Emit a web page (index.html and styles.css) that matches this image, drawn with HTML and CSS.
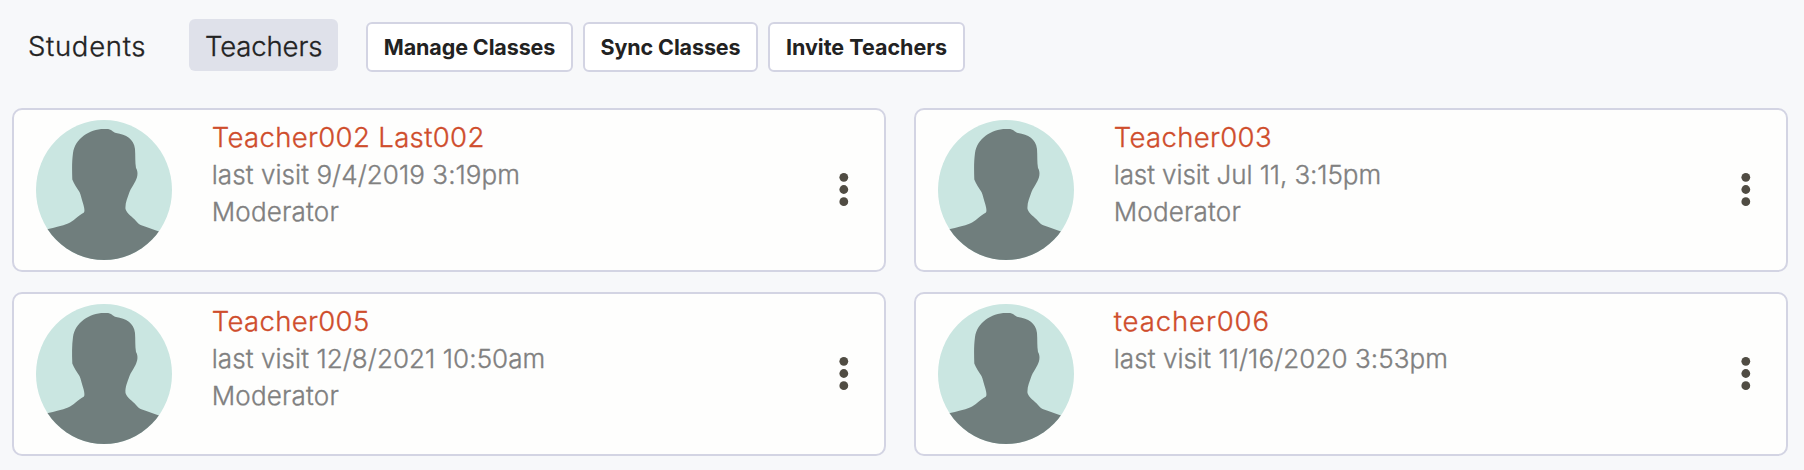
FILE: index.html
```html
<!DOCTYPE html>
<html lang="en">
<head>
<meta charset="utf-8">
<title>Teachers</title>
<link rel="stylesheet" href="styles.css">
</head>
<body>
<svg class="defs" aria-hidden="true">
  <symbol id="avatar" viewBox="0 0 136 140">
    <clipPath id="oval"><ellipse cx="68" cy="70" rx="68" ry="70"/></clipPath>
    <g clip-path="url(#oval)">
      <rect width="136" height="140" fill="#cae6e1"/>
      <path fill="#707e7d" d="M0 112 L11 109.300 C19 107.300 26 106 32 103.500 C38 101 41 96.500 48 92.500 C49 91 48 87 47.500 85 C45.500 79 45 75 43.500 72 C41 68 38 64 36.300 59.500 C36 50 35.800 42 37 33 C39 19 53 9 68 9 C77 8.500 75 11.500 80 13 C90 14.500 98 19 99 29 C99.500 36 99 42 100 48 C102.500 52 101.500 57 99.500 61 C97 66 95 68 93.500 72 C91.500 78 89 83 89.500 89 C91 94 97 97 100 101 C102 103.500 103 104.500 106 105.500 C112 107.500 117 109.500 123 111.500 L136 116 V140 H0Z"/>
    </g>
  </symbol>
  <symbol id="more" viewBox="0 0 10 36">
    <g fill="#504c43"><circle cx="4.800" cy="5.300" r="4.400"/><circle cx="4.800" cy="17.500" r="4.400"/><circle cx="4.800" cy="29.700" r="4.400"/></g>
  </symbol>
</svg>
<header class="toolbar">
  <nav class="tabs">
    <a class="tab">Students</a>
    <a class="tab tab-active">Teachers</a>
  </nav>
  <div class="actions">
    <button class="button manage">Manage Classes</button>
    <button class="button sync">Sync Classes</button>
    <button class="button invite">Invite Teachers</button>
  </div>
</header>
<main class="cards">
  <article class="card">
    <svg class="avatar"><use href="#avatar"/></svg>
    <div class="info">
      <a class="name">Teacher002 Last002</a>
      <p class="meta">last visit 9/4/2019 3:19pm</p>
      <p class="meta role">Moderator</p>
    </div>
    <svg class="more"><use href="#more"/></svg>
  </article>
  <article class="card">
    <svg class="avatar"><use href="#avatar"/></svg>
    <div class="info">
      <a class="name">Teacher003</a>
      <p class="meta tight">last visit Jul 11, 3:15pm</p>
      <p class="meta role">Moderator</p>
    </div>
    <svg class="more"><use href="#more"/></svg>
  </article>
  <article class="card">
    <svg class="avatar"><use href="#avatar"/></svg>
    <div class="info">
      <a class="name">Teacher005</a>
      <p class="meta">last visit 12/8/2021 10:50am</p>
      <p class="meta role">Moderator</p>
    </div>
    <svg class="more"><use href="#more"/></svg>
  </article>
  <article class="card">
    <svg class="avatar"><use href="#avatar"/></svg>
    <div class="info">
      <a class="name wide">teacher006</a>
      <p class="meta">last visit 11/16/2020 3:53pm</p>
    </div>
    <svg class="more"><use href="#more"/></svg>
  </article>
</main>
</body>
</html>
```
FILE: styles.css
```css
* { box-sizing: border-box; }
body {
  margin: 0;
  height: 470px;
  overflow: hidden;
  background: #f7f8fa;
  font-family: Inter, "Liberation Sans", sans-serif;
  color: #222;
}
.defs { display: block; width: 0; height: 0; }
.toolbar {
  display: flex;
  gap: 28px;
  height: 108px;
  padding: 19px 12px 0;
}
.tabs { display: flex; gap: 27px; }
.tab {
  height: 52px;
  padding-left: 16px;
  border-radius: 6px;
  font-size: 27.500px;
  font-weight: 300;
  -webkit-text-stroke: 0.350px currentColor;
  line-height: 54px;
  white-space: nowrap;
}
.tab:first-child { width: 150px; letter-spacing: 0.700px; }
.tab-active { width: 149px; background: #dfe1ea; letter-spacing: -0.120px; }
.actions { display: flex; gap: 10px; padding-top: 3px; }
.button {
  height: 50px;
  padding: 0;
  border: 2px solid #d3d4e3;
  border-radius: 6px;
  background: #fff;
  color: #222;
  font: 700 21.500px/46px Inter, "Liberation Sans", sans-serif;
  letter-spacing: -0.120px;
  white-space: nowrap;
}
.manage { width: 207px; }
.sync { width: 175px; }
.invite { width: 197px; letter-spacing: 0; }
.cards {
  display: grid;
  grid-template-columns: 874px 874px;
  grid-auto-rows: 164px;
  gap: 20px 28px;
  padding-left: 12px;
}
.card {
  display: flex;
  align-items: flex-start;
  padding: 10px 35px 10px 22px;
  border: 2px solid #d3d4e3;
  border-radius: 10px;
  background: #fefefd;
}
.avatar { flex: none; width: 136px; height: 140px; }
.info { flex: 1; padding-left: 39.700px; }
.name {
  display: block;
  height: 36px;
  color: #cf4d2c;
  font-size: 27.500px;
  font-weight: 300;
  -webkit-text-stroke: 0.350px currentColor;
  line-height: 34px;
  letter-spacing: 0.360px;
}
.wide { letter-spacing: 0.900px; }
.meta {
  margin: 0;
  color: #808080;
  font-size: 26px;
  font-weight: 300;
  -webkit-text-stroke: 0.350px currentColor;
  line-height: 37px;
  letter-spacing: 0.070px;
}
.tight { letter-spacing: -0.090px; }
.role { letter-spacing: 0.200px; }
.more { flex: none; width: 10px; height: 36px; margin-top: 52px; }
```
